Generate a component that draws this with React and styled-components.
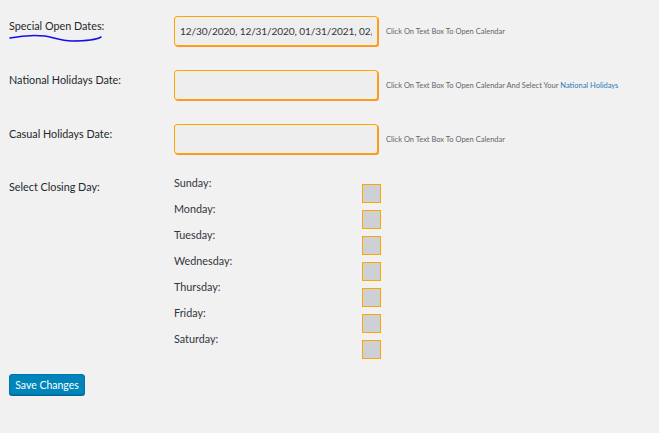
import React from "react";
import styled, { createGlobalStyle } from "styled-components";

const GlobalStyle = createGlobalStyle`
  html, body {
    margin: 0;
    padding: 0;
    background: #f1f1f1;
  }
  body {
    font-family: Lato, "Open Sans", "Liberation Sans", sans-serif;
    color: #23282d;
  }
`;

const Page = styled.form`
  position: relative;
  width: 659px;
  height: 433px;
  padding: 16px 9px 0;
  box-sizing: border-box;
`;

const Row = styled.div`
  display: grid;
  grid-template-columns: 165px auto 1fr;
  align-items: start;
  margin-bottom: ${p => p.gap ?? 24}px;
`;

const Label = styled.div`
  font-size: 10.8px;
  line-height: 14px;
  padding-top: ${p => p.top ?? 3}px;
  color: #23282d;
`;

const DateInput = styled.input`
  display: block;
  width: 204px;
  height: 30px;
  margin: 0;
  box-sizing: border-box;
  border: 1px solid #ffa500;
  border-radius: 3px;
  box-shadow: 1px 1px 0 #ff9330;
  background: #eeeeee;
  padding: 0 5px;
  font-family: inherit;
  font-size: 10.1px;
  letter-spacing: -0.1px;
  color: #32373c;
  outline: none;
`;

const Help = styled.div`
  align-self: center;
  margin-left: 8px;
  padding-top: 1px;
  font-size: 7.5px;
  color: #5f656b;
  white-space: nowrap;

  a {
    color: #2a7ab8;
    text-decoration: none;
  }
`;

const Days = styled.div`
  display: flex;
  flex-direction: column;
`;

const DayRow = styled.label`
  display: grid;
  grid-template-columns: 188px 19px;
  height: 26px;
`;

const DayName = styled.span`
  font-size: 10.8px;
  line-height: 14px;
  color: #32373c;
`;

const Box = styled.span`
  display: block;
  width: 19px;
  height: 19px;
  margin-top: 8px;
  box-sizing: border-box;
  border: 1.5px solid #ffa500;
  background: #cdd1d6;
`;

const SaveButton = styled.button`
  display: block;
  margin-top: 16px;
  width: 76px;
  height: 21px;
  padding: 0;
  border: 1px solid #0073aa;
  border-radius: 3px;
  background: #0085ba;
  box-shadow: 0 1px 0 #006799;
  color: #fff;
  font-family: inherit;
  font-size: 10.5px;
  cursor: pointer;
`;

const Scribble = styled.svg`
  position: absolute;
  left: 0;
  top: 0;
  pointer-events: none;
`;

const days = ["Sunday", "Monday", "Tuesday", "Wednesday", "Thursday", "Friday", "Saturday"];

export default function App() {
  return (
    <>
      <GlobalStyle />
      <Page onSubmit={e => e.preventDefault()}>
        <Row>
          <Label>Special Open Dates:</Label>
          <DateInput defaultValue="12/30/2020, 12/31/2020, 01/31/2021, 02/28/2021" />
          <Help>Click On Text Box To Open Calendar</Help>
        </Row>
        <Row>
          <Label>National Holidays Date:</Label>
          <DateInput />
          <Help>
            Click On Text Box To Open Calendar And Select Your <a href="#">National Holidays</a>
          </Help>
        </Row>
        <Row gap={22}>
          <Label>Casual Holidays Date:</Label>
          <DateInput />
          <Help>Click On Text Box To Open Calendar</Help>
        </Row>
        <Row gap={0}>
          <Label top={4}>Select Closing Day:</Label>
          <Days>
            {days.map(d => (
              <DayRow key={d}>
                <DayName>{d}:</DayName>
                <Box />
              </DayRow>
            ))}
          </Days>
        </Row>
        <SaveButton type="submit">Save Changes</SaveButton>
        <Scribble width="120" height="50">
          <path
            d="M10 38 C 20 36, 35 35, 45 36 C 55 38, 62 41, 72 41 C 85 41, 96 40, 101 37"
            fill="none"
            stroke="#1010ee"
            strokeWidth="1.5"
            strokeLinecap="round"
          />
        </Scribble>
      </Page>
    </>
  );
}
